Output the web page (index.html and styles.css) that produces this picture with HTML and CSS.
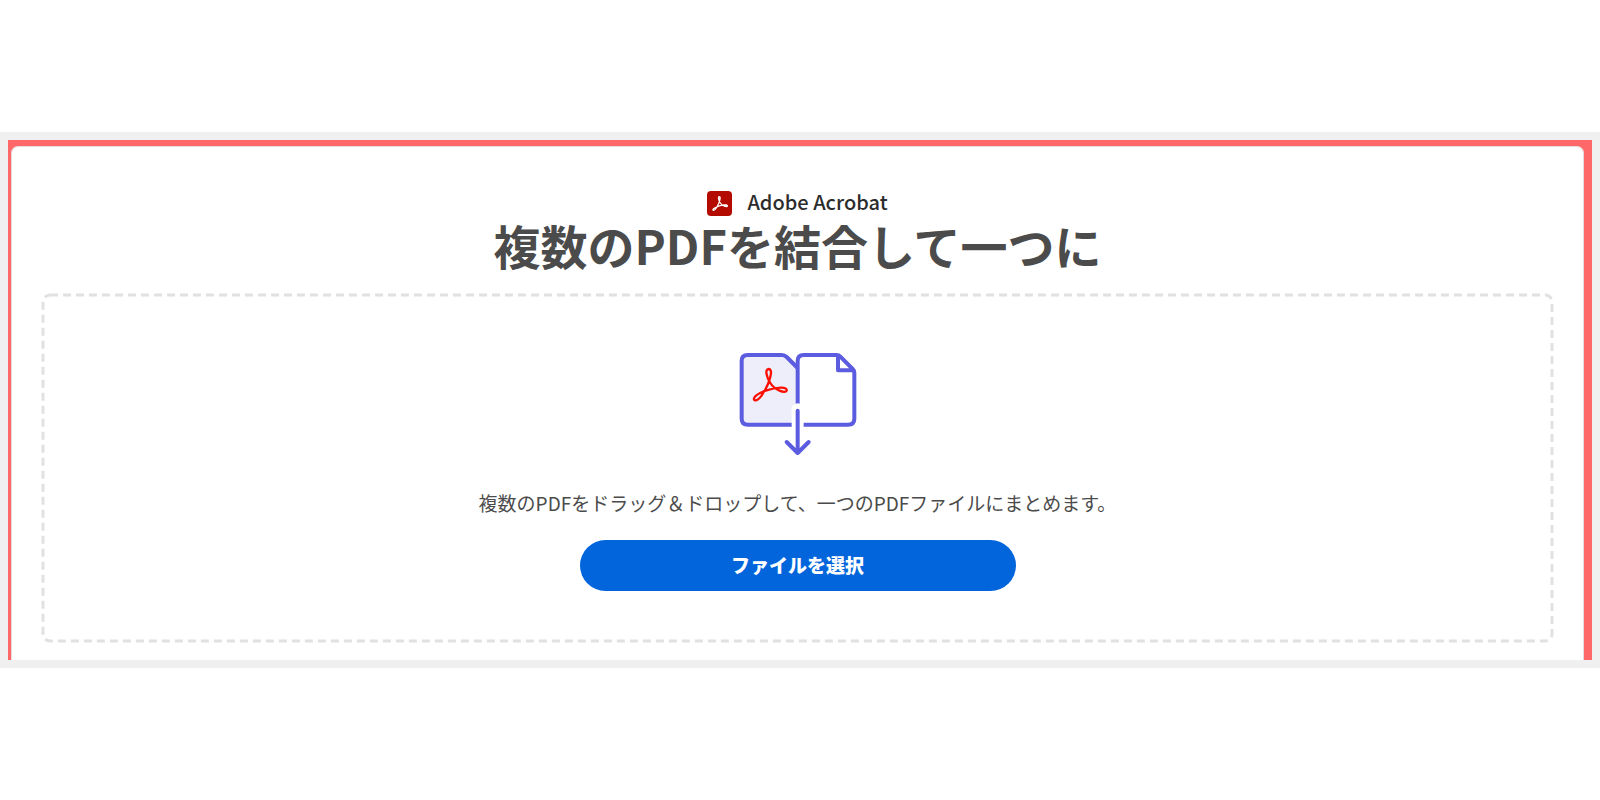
FILE: index.html
```html
<!DOCTYPE html>
<html lang="ja">
<head>
    <meta charset="UTF-8">
    <meta name="viewport" content="width=device-width, initial-scale=1.0">
    <title>Adobe Acrobat</title>
    <link rel="stylesheet" href="styles.css">
</head>
<body>
    <div class="wrapper">
        <div class="frame">
            <main class="card">
                <div class="brand">
                    <svg class="brand-logo" viewBox="0 0 75 75" aria-hidden="true">
                        <rect width="75" height="75" rx="12" fill="#b30b00"/>
                        <path d="M37 17 C33 17 34 27 40 36 C46 45 60 49 61 45 C62 39 42 41 29 48 C19 52 16 57 19 58 C24 60 34 43 38 29 C40 22 40 17 37 17 Z" fill="none" stroke="#fff" stroke-width="4"/>
                    </svg>
                    <span class="brand-name">Adobe Acrobat</span>
                </div>
                <h1 class="title">複数のPDFを結合して一つに</h1>

                <div class="dropzone">
                    <svg class="dropzone-border" aria-hidden="true">
                        <rect width="100%" height="100%" rx="7"/>
                    </svg>
                    <svg class="merge-icon" viewBox="0 30 435 330" aria-hidden="true">
                        <g fill="none" stroke="#5c5ce0" stroke-width="12" stroke-linejoin="round">
                            <path d="M202 254 H69 Q50 254 50 236 V62 Q50 45 68 45 H170 Q179 45 185 51 L218 84 V254 Z" fill="#eeeefa" stroke="none"/>
                            <path d="M202 254 H69 Q50 254 50 236 V62 Q50 45 68 45 H170 Q179 45 185 51 L218 84"/>
                            <path d="M218 192 V62 Q218 45 236 45 H340 L388 93 V236 Q388 254 369 254 H234 V192 Z" fill="#fff" stroke="none"/>
                            <path d="M218 192 V62 Q218 45 236 45 H336 Q341 45 346 50 L383 87 Q388 92 388 98 V236 Q388 254 369 254 H234"/>
                            <path d="M339 46 V91 H386"/>
                            <path d="M218 208 V258" stroke="#fff" stroke-width="36" stroke-linecap="round"/>
                            <path d="M218 212 V338 M185 306 L218 339 L251 306" stroke-linecap="round"/>
                        </g>
                        <path d="M131 87 C119 88 124 110 136 129 C148 149 181 162 185 152 C188 138 153 142 122 152 C93 162 83 175 88 180 C99 187 118 158 129 132 C139 108 142 87 131 87 Z" fill="none" stroke="#fa0f00" stroke-width="7"/>
                    </svg>
                    <p class="description">複数のPDFをドラッグ＆ドロップして、一つのPDFファイルにまとめます。</p>
                    <button type="button" class="select-button">ファイルを選択</button>
                </div>
            </main>
        </div>
    </div>
</body>
</html>
```
FILE: styles.css
```css
* {
    box-sizing: border-box;
}

body {
    font-family: "Noto Sans CJK JP", sans-serif;
    background-color: #fff;
    margin: 0;
    min-height: 100vh;
    display: flex;
    align-items: center;
}

.wrapper {
    width: 100%;
    padding: 8px;
    background-color: #f0f0f0;
}

.frame {
    padding: 6px 8px 0 3px;
    background-color: #ff6868;
}

/* Card */
.card {
    padding: 43px 29px 17px;
    background-color: #fff;
    border: 1px solid #e6dada;
    border-bottom: 0;
    border-radius: 7px 7px 0 0;
}

.brand {
    display: flex;
    justify-content: center;
    align-items: center;
    gap: 15px;
    height: 26px;
}

.brand-logo {
    width: 25px;
    height: 25px;
}

.brand-name {
    font-size: 20px;
    font-weight: 500;
    line-height: 20px;
    padding-bottom: 2px;
    color: #2c2c2c;
}

.title {
    margin: 0 0 19px;
    font-size: 47px;
    font-weight: 700;
    line-height: 58px;
    text-align: center;
    color: #4b4b4b;
}

/* Drop area */
.dropzone {
    position: relative;
    display: flex;
    flex-direction: column;
    align-items: center;
    padding: 57px 20px 52px;
}

.dropzone-border {
    position: absolute;
    inset: 2px;
    width: calc(100% - 4px);
    height: calc(100% - 4px);
    overflow: visible;
    pointer-events: none;
}

.dropzone-border rect {
    fill: none;
    stroke: #e1e1e1;
    stroke-width: 3px;
    stroke-dasharray: 8 5;
}

.merge-icon {
    width: 145px;
    height: 110px;
}

.description {
    margin: 28px 0 22px;
    font-size: 19px;
    line-height: 30px;
    text-align: center;
    color: #4b4b4b;
}

.select-button {
    width: 436px;
    max-width: 100%;
    height: 51px;
    padding: 0 0 3px;
    border: none;
    border-radius: 26px;
    background-color: #0265dc;
    color: #fff;
    font-family: inherit;
    font-size: 19px;
    font-weight: 900;
    cursor: pointer;
}

.select-button:hover {
    background-color: #0054b6;
}
```
